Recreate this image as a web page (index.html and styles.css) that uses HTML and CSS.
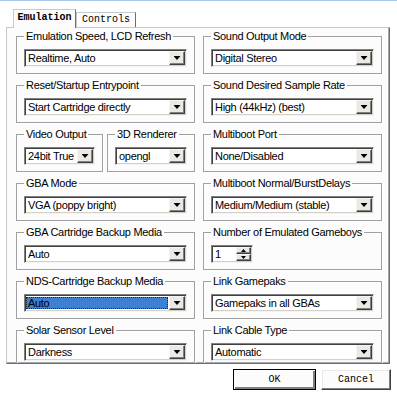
FILE: index.html
```html
<!DOCTYPE html>
<html lang="en">
<head>
    <meta charset="UTF-8">
    <title>Emulation Settings</title>
    <link rel="stylesheet" href="styles.css">
</head>
<body>
    <div class="dialog">
        <div class="tabs">
            <div class="tab active">Emulation</div>
            <div class="tab">Controls</div>
        </div>
        <div class="panel">
            <div class="column">
                <fieldset class="group">
                    <legend>Emulation Speed, LCD Refresh</legend>
                    <div class="combo"><span class="value">Realtime, Auto</span><span class="drop"></span></div>
                </fieldset>
                <fieldset class="group">
                    <legend>Reset/Startup Entrypoint</legend>
                    <div class="combo"><span class="value">Start Cartridge directly</span><span class="drop"></span></div>
                </fieldset>
                <div class="pair">
                    <fieldset class="group">
                        <legend>Video Output</legend>
                        <div class="combo"><span class="value">24bit True</span><span class="drop"></span></div>
                    </fieldset>
                    <fieldset class="group">
                        <legend>3D Renderer</legend>
                        <div class="combo"><span class="value">opengl</span><span class="drop"></span></div>
                    </fieldset>
                </div>
                <fieldset class="group">
                    <legend>GBA Mode</legend>
                    <div class="combo"><span class="value">VGA (poppy bright)</span><span class="drop"></span></div>
                </fieldset>
                <fieldset class="group">
                    <legend>GBA Cartridge Backup Media</legend>
                    <div class="combo"><span class="value">Auto</span><span class="drop"></span></div>
                </fieldset>
                <fieldset class="group">
                    <legend>NDS-Cartridge Backup Media</legend>
                    <div class="combo"><span class="value selected">Auto</span><span class="drop"></span></div>
                </fieldset>
                <fieldset class="group">
                    <legend>Solar Sensor Level</legend>
                    <div class="combo"><span class="value">Darkness</span><span class="drop"></span></div>
                </fieldset>
            </div>
            <div class="column">
                <fieldset class="group">
                    <legend>Sound Output Mode</legend>
                    <div class="combo"><span class="value">Digital Stereo</span><span class="drop"></span></div>
                </fieldset>
                <fieldset class="group">
                    <legend>Sound Desired Sample Rate</legend>
                    <div class="combo"><span class="value">High (44kHz) (best)</span><span class="drop"></span></div>
                </fieldset>
                <fieldset class="group">
                    <legend>Multiboot Port</legend>
                    <div class="combo"><span class="value">None/Disabled</span><span class="drop"></span></div>
                </fieldset>
                <fieldset class="group">
                    <legend>Multiboot Normal/BurstDelays</legend>
                    <div class="combo"><span class="value">Medium/Medium (stable)</span><span class="drop"></span></div>
                </fieldset>
                <fieldset class="group">
                    <legend>Number of Emulated Gameboys</legend>
                    <div class="spin">
                        <span class="value">1</span>
                        <span class="spin-buttons">
                            <span class="spin-btn up"></span>
                            <span class="spin-btn down"></span>
                        </span>
                    </div>
                </fieldset>
                <fieldset class="group">
                    <legend>Link Gamepaks</legend>
                    <div class="combo"><span class="value">Gamepaks in all GBAs</span><span class="drop"></span></div>
                </fieldset>
                <fieldset class="group">
                    <legend>Link Cable Type</legend>
                    <div class="combo"><span class="value">Automatic</span><span class="drop"></span></div>
                </fieldset>
            </div>
        </div>
        <div class="actions">
            <button class="btn default">OK</button>
            <button class="btn cancel">Cancel</button>
        </div>
    </div>
</body>
</html>
```

FILE: styles.css
```css
* {
    box-sizing: border-box;
}
body {
    margin: 0;
    background-color: #fff;
    border-top: 1px solid #a9c6ec;
    font-family: "Liberation Sans", Arial, sans-serif;
    font-size: 11px;
    letter-spacing: -0.3px;
    color: #000;
}
.dialog {
    width: 397px;
    padding: 0 7px 0 6px;
}
.tabs {
    display: flex;
    align-items: flex-end;
    height: 26px;
    padding-left: 7px;
}
.tab {
    font-family: "Liberation Mono", "Courier New", monospace;
    font-size: 10px;
    letter-spacing: 0;
    width: 60px;
    height: 15px;
    line-height: 14px;
    text-align: center;
    background-color: #fcfcfc;
    border: 1px solid #c8c8c8;
    border-right-color: #6e6e6e;
    border-bottom: none;
}
.tab.active {
    position: relative;
    width: 63px;
    height: 19px;
    line-height: 16px;
    margin-bottom: -1px;
    font-weight: bold;
    box-shadow: inset 1px 1px #fff;
}
.panel {
    height: 337px;
    overflow: hidden;
    display: grid;
    grid-template-columns: 179px 179px;
    column-gap: 8px;
    align-items: start;
    padding: 1px 7px 0 9px;
    background-color: #fcfcfc;
    border: 1px solid #c8c8c8;
    border-right-color: #6e6e6e;
    border-bottom-color: #6e6e6e;
    box-shadow: inset -1px -1px #a8a8a8;
}
.column {
    display: flex;
    flex-direction: column;
    gap: 4px;
}
.pair {
    display: grid;
    grid-template-columns: 87px 88px;
    gap: 4px;
}
.group {
    margin: 0;
    min-width: 0;
    padding: 6px 7px 6px;
    border: 1px solid #a0a0a0;
    box-shadow: inset 1px 1px #fff, 1px 1px #fff;
}
.group legend {
    padding: 0 2px;
    line-height: 14px;
    white-space: nowrap;
}
.combo,
.spin {
    display: flex;
    height: 18px;
    padding: 1px;
    background-color: #fff;
    border: 1px solid;
    border-color: #808080 #f4f4f4 #f4f4f4 #808080;
    box-shadow: inset 1px 1px #404040, inset -1px -1px #d4d0c8;
}
.value {
    flex: 1;
    min-width: 0;
    padding-left: 2px;
    line-height: 14px;
    white-space: nowrap;
    overflow: hidden;
}
.value.selected {
    margin: 1px 1px 1px 0;
    line-height: 12px;
    background-color: #3d7fd1;
    outline: 1px dotted #222;
    outline-offset: -1px;
}
.drop {
    width: 16px;
    display: flex;
    align-items: center;
    justify-content: center;
    background-color: #ece9e4;
    border: 1px solid;
    border-color: #f4f4f4 #404040 #404040 #f4f4f4;
    box-shadow: inset -1px -1px #808080;
}
.drop::before {
    content: "";
    width: 7px;
    height: 4px;
    background-color: #000;
    clip-path: polygon(0 0, 100% 0, 50% 100%);
}
.spin {
    width: 42px;
}
.spin-buttons {
    width: 15px;
    display: flex;
    flex-direction: column;
}
.spin-btn {
    flex: 1;
    display: flex;
    align-items: center;
    justify-content: center;
    background-color: #ece9e4;
    border: 1px solid;
    border-color: #f4f4f4 #404040 #404040 #f4f4f4;
    box-shadow: inset -1px -1px #808080;
}
.spin-btn::before {
    content: "";
    width: 5px;
    height: 3px;
    background-color: #000;
}
.spin-btn.up::before {
    clip-path: polygon(50% 0, 100% 100%, 0 100%);
}
.spin-btn.down::before {
    clip-path: polygon(0 0, 100% 0, 50% 100%);
}
.actions {
    display: flex;
    justify-content: flex-end;
    gap: 5px;
    margin-top: 5px;
    margin-right: -1px;
}
.btn {
    height: 21px;
    padding: 0;
    font-family: "Liberation Mono", "Courier New", monospace;
    font-size: 10px;
    color: #000;
    background-color: #fcfcfc;
    border: 1px solid;
    border-color: #fff #404040 #404040 #fff;
    box-shadow: inset -1px -1px #808080, inset 1px 1px #e8e8e8;
}
.btn.default {
    width: 83px;
    border-color: #000;
    box-shadow: inset 1px 1px #fff, inset -2px -2px #808080;
}
.btn.cancel {
    width: 70px;
}
```
